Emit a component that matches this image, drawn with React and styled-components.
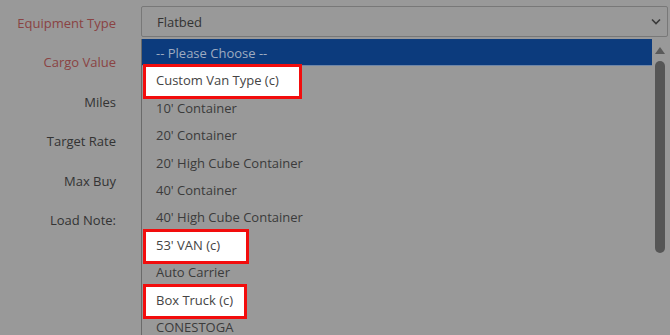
import React from "react";
import styled, { createGlobalStyle } from "styled-components";

const GlobalStyle = createGlobalStyle`
  html, body {
    margin: 0;
    padding: 0;
    background: #999999;
  }
  body {
    font-family: "Open Sans", "Noto Sans", sans-serif;
    overflow: hidden;
  }
`;

const Page = styled.div`
  display: flex;
  width: 670px;
  height: 335px;
  background: #999999;
  overflow: hidden;
`;

const Labels = styled.div`
  display: flex;
  flex-direction: column;
  width: 116px;
  padding-top: 4px;
  margin-right: 25px;
`;

const Label = styled.div`
  flex-shrink: 0;
  height: 39.4px;
  line-height: 39.4px;
  text-align: right;
  font-size: 13px;
  color: ${p => (p.required ? "#8a4343" : "#333333")};
  white-space: nowrap;
`;

const Field = styled.div`
  flex: 1;
  display: flex;
  flex-direction: column;
  padding-top: 6px;
  margin-right: 2px;
  min-height: 0;
`;

const Select = styled.div`
  flex-shrink: 0;
  display: flex;
  align-items: center;
  justify-content: space-between;
  height: 29px;
  border: 1px solid #787878;
  border-radius: 2px;
  padding: 0 6px 0 15px;
  font-size: 13px;
  color: #333333;
`;

const List = styled.div`
  display: flex;
  margin-top: 2px;
  border-left: 1px solid #6a6a6a;
  flex: 1;
  min-height: 0;
`;

const Items = styled.div`
  flex: 1;
  display: flex;
  flex-direction: column;
`;

const Item = styled.div`
  flex-shrink: 0;
  position: relative;
  height: 27.4px;
  line-height: 27.4px;
  padding-left: 14px;
  font-size: 13px;
  white-space: nowrap;
  color: ${p => (p.active ? "#9eabc0" : "#3b3b3b")};
  background: ${p => (p.active ? "#0c3b7d" : "transparent")};
  border-bottom: ${p => (p.active ? "1px solid #6f86a8" : "none")};
  box-sizing: border-box;
`;

const ItemText = styled.span`
  position: relative;
  top: 1px;
  z-index: 1;
  color: ${p => (p.marked ? "#444444" : "inherit")};
`;

const Highlight = styled.span`
  position: absolute;
  left: 1px;
  top: -2px;
  height: 35px;
  box-sizing: border-box;
  border: 3.5px solid #f20d0d;
  background: #ffffff;
`;

const Scrollbar = styled.div`
  width: 16px;
  display: flex;
  flex-direction: column;
  align-items: center;
  padding-top: 8px;
`;

const Thumb = styled.div`
  width: 10px;
  height: 192px;
  margin-top: 7px;
  border-radius: 5px;
  background: #565656;
`;

const options = [
  { label: "-- Please Choose --", active: true },
  { label: "Custom Van Type (c)", mark: 159 },
  { label: "10' Container" },
  { label: "20' Container" },
  { label: "20' High Cube Container" },
  { label: "40' Container" },
  { label: "40' High Cube Container" },
  { label: "53' VAN (c)", mark: 106 },
  { label: "Auto Carrier" },
  { label: "Box Truck (c)", mark: 104 },
  { label: "CONESTOGA" },
];

const labels = [
  { text: "Equipment Type", required: true },
  { text: "Cargo Value", required: true },
  { text: "Miles" },
  { text: "Target Rate" },
  { text: "Max Buy" },
  { text: "Load Note:" },
];

export default function App() {
  return (
    <Page>
      <GlobalStyle />
      <Labels>
        {labels.map(l => (
          <Label key={l.text} required={l.required}>
            {l.text}
          </Label>
        ))}
      </Labels>
      <Field>
        <Select>
          <span>Flatbed</span>
          <svg width="10" height="7" viewBox="0 0 10 7">
            <path d="M1 1.5 L5 5.5 L9 1.5" fill="none" stroke="#3a3a3a" strokeWidth="1.6" />
          </svg>
        </Select>
        <List>
          <Items>
            {options.map(o => (
              <Item key={o.label} active={o.active}>
                {o.mark && <Highlight style={{ width: o.mark }} />}
                <ItemText marked={!!o.mark}>{o.label}</ItemText>
              </Item>
            ))}
          </Items>
          <Scrollbar>
            <svg width="10" height="7" viewBox="0 0 10 7">
              <path d="M0 7 L5 0 L10 7 Z" fill="#5a5a5a" />
            </svg>
            <Thumb />
          </Scrollbar>
        </List>
      </Field>
    </Page>
  );
}
